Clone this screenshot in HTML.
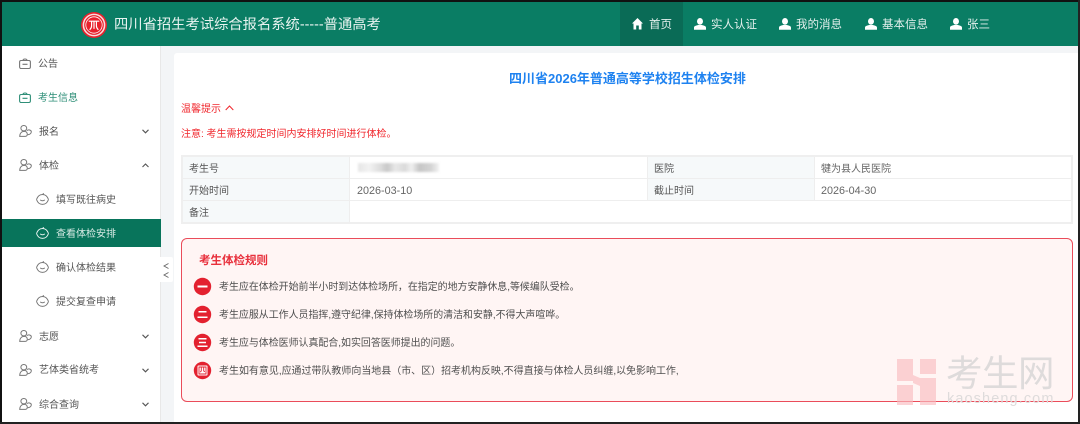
<!DOCTYPE html>
<html lang="zh"><head><meta charset="utf-8">
<style>
html,body{margin:0;padding:0}
body{width:1080px;height:424px;position:relative;overflow:hidden;background:#fff;font-family:"Liberation Sans","Noto Sans CJK SC",sans-serif;color:#555}
.a{position:absolute;white-space:nowrap}
.t{font-size:10px;line-height:16px;margin-top:1px}
.n{font-size:11.500px;line-height:16px;color:#e4f0ed;margin-top:1px}
svg{position:absolute;overflow:visible}
</style></head><body>
<!-- backgrounds -->
<div class="a" style="left:0;top:2px;width:1080px;height:44px;background:#0a7d64"></div>
<div class="a" style="left:620px;top:2px;width:63px;height:44px;background:#0a6b56"></div>
<div class="a" style="left:161px;top:46px;width:919px;height:378px;background:#f3f5f7"></div>
<div class="a" style="left:174px;top:53px;width:906px;height:371px;background:#fff;border-radius:3px 0 0 0"></div>
<div class="a" style="left:0;top:46px;width:160px;height:378px;background:#fff;border-right:1px solid #e8e8e8"></div>

<!-- header -->
<svg style="left:81px;top:11.500px" width="26" height="26" viewBox="0 0 27 27"><circle cx="13.500" cy="13.500" r="13.500" fill="#e8212c"/><circle cx="13.500" cy="13.500" r="11" fill="none" stroke="#fbdcdc" stroke-width="1.600"/><circle cx="13.500" cy="13.500" r="8.500" fill="none" stroke="#fff" stroke-width=".8"/><path d="M8 9.500h11M11 9.500v5c0 2-1 3-2 4M16 9.500v5c0 2 1 3 2 4M13.500 9.500v8" fill="none" stroke="#fff" stroke-width="1.200"/></svg>
<div class="a" style="left:114px;top:14px;font-size:14.300px;line-height:22px;color:#e8f3f0">四川省招生考试综合报名系统-----普通高考</div>

<svg style="left:632px;top:18px" width="11" height="12" viewBox="0 0 11 12"><path d="M5.500 0L11 5.500H9.500V11.500H6.800V7.500H4.200V11.500H1.500V5.500H0Z" fill="#fff"/></svg>
<div class="a n" style="left:649px;top:16px;">首页</div>
<svg style="left:694px;top:18px" width="12" height="12" viewBox="0 0 12 12"><ellipse cx="6" cy="3.400" rx="3" ry="3.400" fill="#fff"/><path d="M0 11.800V9.500C0 8 2.500 7.500 4 7h4c1.500.5 4 1 4 2.500v2.300z" fill="#fff"/></svg>
<div class="a n" style="left:711px;top:16px;">实人认证</div>
<svg style="left:779px;top:18px" width="12" height="12" viewBox="0 0 12 12"><ellipse cx="6" cy="3.400" rx="3" ry="3.400" fill="#fff"/><path d="M0 11.800V9.500C0 8 2.500 7.500 4 7h4c1.500.5 4 1 4 2.500v2.300z" fill="#fff"/></svg>
<div class="a n" style="left:796px;top:16px;">我的消息</div>
<svg style="left:865px;top:18px" width="12" height="12" viewBox="0 0 12 12"><ellipse cx="6" cy="3.400" rx="3" ry="3.400" fill="#fff"/><path d="M0 11.800V9.500C0 8 2.500 7.500 4 7h4c1.500.5 4 1 4 2.500v2.300z" fill="#fff"/></svg>
<div class="a n" style="left:882px;top:16px;">基本信息</div>
<svg style="left:950px;top:18px" width="12" height="12" viewBox="0 0 12 12"><ellipse cx="6" cy="3.400" rx="3" ry="3.400" fill="#fff"/><path d="M0 11.800V9.500C0 8 2.500 7.500 4 7h4c1.500.5 4 1 4 2.500v2.300z" fill="#fff"/></svg>
<div class="a n" style="left:967px;top:16px;">张三</div>

<!-- sidebar -->
<div class="a" style="left:2px;top:219px;width:159px;height:28px;background:#08745b"></div>

<svg style="left:19px;top:58px" width="12" height="11" viewBox="0 0 12 11" fill="none" stroke="#777" stroke-width="1.100"><rect x=".6" y="2.500" width="10.800" height="8" rx="1.500"/><path d="M4 2.500C4 .5 8 .5 8 2.500M3.500 6.300h5"/></svg>
<div class="a t" style="left:38px;top:56px;color:#555">公告</div>
<svg style="left:19px;top:92px" width="12" height="11" viewBox="0 0 12 11" fill="none" stroke="#2f8f78" stroke-width="1.100"><rect x=".6" y="2.500" width="10.800" height="8" rx="1.500"/><path d="M4 2.500C4 .5 8 .5 8 2.500M3.500 6.300h5"/></svg>
<div class="a t" style="left:38px;top:90px;color:#2f8f78">考生信息</div>

<svg style="left:19px;top:125px" width="13" height="12" viewBox="0 0 13 12" fill="none" stroke="#777" stroke-width="1"><ellipse cx="4.800" cy="3.200" rx="2.900" ry="2.700"/><path d="M.7 11.400C.9 8 2.800 6.400 5.200 6.400c1.700 0 2.900 1 3.100 2.600.2 1.400-.7 2.400-2 2.400z"/><path d="M7.900 5.700c1.200-1.300 4.500-1 4.400 1.200-.1 1.500-1.500 2.700-3.600 2.900"/></svg>
<div class="a t" style="left:39px;top:124px;color:#555">报名</div>
<svg style="left:142px;top:129px" width="7" height="5"><path d="M.5 .8L3.500 3.800 6.500 .8" fill="none" stroke="#555" stroke-width="1.100"/></svg>

<svg style="left:19px;top:159px" width="13" height="12" viewBox="0 0 13 12" fill="none" stroke="#777" stroke-width="1"><ellipse cx="4.800" cy="3.200" rx="2.900" ry="2.700"/><path d="M.7 11.400C.9 8 2.800 6.400 5.200 6.400c1.700 0 2.900 1 3.100 2.600.2 1.400-.7 2.400-2 2.400z"/><path d="M7.900 5.700c1.200-1.300 4.500-1 4.400 1.200-.1 1.500-1.500 2.700-3.600 2.900"/></svg>
<div class="a t" style="left:39px;top:158px;color:#555">体检</div>
<svg style="left:142px;top:163px" width="7" height="5"><path d="M.5 4L3.500 1 6.500 4" fill="none" stroke="#555" stroke-width="1.100"/></svg>

<svg style="left:36px;top:193px" width="13" height="12" viewBox="0 0 13 12" fill="none" stroke="#777" stroke-width="1"><path d="M.5 6.500C1.600 3.400 3.700 1.500 6.500 1.500c.5-.6 1-.9 1.500-.9M12.500 6.500C11.400 9.600 9.300 11.400 6.500 11.400S1.600 9.600.5 6.500M6.500 1.500c2.800 0 4.900 1.900 6 5"/><path d="M4.300 6.800c.9 1.300 3.500 1.300 4.400 0"/></svg>
<div class="a t" style="left:56px;top:192px;color:#555">填写既往病史</div>
<svg style="left:36px;top:227px" width="13" height="12" viewBox="0 0 13 12" fill="none" stroke="#e6f2ef" stroke-width="1"><path d="M.5 6.500C1.600 3.400 3.700 1.500 6.500 1.500c.5-.6 1-.9 1.500-.9M12.500 6.500C11.400 9.600 9.300 11.400 6.500 11.400S1.600 9.600.5 6.500M6.500 1.500c2.800 0 4.900 1.900 6 5"/><path d="M4.300 6.800c.9 1.300 3.500 1.300 4.400 0"/></svg>
<div class="a t" style="left:56px;top:226px;color:#d9ebe6">查看体检安排</div>
<svg style="left:36px;top:261px" width="13" height="12" viewBox="0 0 13 12" fill="none" stroke="#777" stroke-width="1"><path d="M.5 6.500C1.600 3.400 3.700 1.500 6.500 1.500c.5-.6 1-.9 1.500-.9M12.500 6.500C11.400 9.600 9.300 11.400 6.500 11.400S1.600 9.600.5 6.500M6.500 1.500c2.800 0 4.900 1.900 6 5"/><path d="M4.300 6.800c.9 1.300 3.500 1.300 4.400 0"/></svg>
<div class="a t" style="left:56px;top:260px;color:#555">确认体检结果</div>
<svg style="left:36px;top:295px" width="13" height="12" viewBox="0 0 13 12" fill="none" stroke="#777" stroke-width="1"><path d="M.5 6.500C1.600 3.400 3.700 1.500 6.500 1.500c.5-.6 1-.9 1.500-.9M12.500 6.500C11.400 9.600 9.300 11.400 6.500 11.400S1.600 9.600.5 6.500M6.500 1.500c2.800 0 4.900 1.900 6 5"/><path d="M4.300 6.800c.9 1.300 3.500 1.300 4.400 0"/></svg>
<div class="a t" style="left:56px;top:294px;color:#555">提交复查申请</div>

<svg style="left:19px;top:330px" width="13" height="12" viewBox="0 0 13 12" fill="none" stroke="#777" stroke-width="1"><ellipse cx="4.800" cy="3.200" rx="2.900" ry="2.700"/><path d="M.7 11.400C.9 8 2.800 6.400 5.200 6.400c1.700 0 2.900 1 3.100 2.600.2 1.400-.7 2.400-2 2.400z"/><path d="M7.900 5.700c1.200-1.300 4.500-1 4.400 1.200-.1 1.500-1.500 2.700-3.600 2.900"/></svg>
<div class="a t" style="left:39px;top:329px;color:#555">志愿</div>
<svg style="left:142px;top:334px" width="7" height="5"><path d="M.5 .8L3.500 3.800 6.500 .8" fill="none" stroke="#555" stroke-width="1.100"/></svg>
<svg style="left:19px;top:364px" width="13" height="12" viewBox="0 0 13 12" fill="none" stroke="#777" stroke-width="1"><ellipse cx="4.800" cy="3.200" rx="2.900" ry="2.700"/><path d="M.7 11.400C.9 8 2.800 6.400 5.200 6.400c1.700 0 2.900 1 3.100 2.600.2 1.400-.7 2.400-2 2.400z"/><path d="M7.900 5.700c1.200-1.300 4.500-1 4.400 1.200-.1 1.500-1.500 2.700-3.600 2.900"/></svg>
<div class="a t" style="left:39px;top:362px;color:#555">艺体类省统考</div>
<svg style="left:142px;top:368px" width="7" height="5"><path d="M.5 .8L3.500 3.800 6.500 .8" fill="none" stroke="#555" stroke-width="1.100"/></svg>
<svg style="left:19px;top:398px" width="13" height="12" viewBox="0 0 13 12" fill="none" stroke="#777" stroke-width="1"><ellipse cx="4.800" cy="3.200" rx="2.900" ry="2.700"/><path d="M.7 11.400C.9 8 2.800 6.400 5.200 6.400c1.700 0 2.900 1 3.100 2.600.2 1.400-.7 2.400-2 2.400z"/><path d="M7.900 5.700c1.200-1.300 4.500-1 4.400 1.200-.1 1.500-1.500 2.700-3.600 2.900"/></svg>
<div class="a t" style="left:39px;top:397px;color:#555">综合查询</div>
<svg style="left:142px;top:402px" width="7" height="5"><path d="M.5 .8L3.500 3.800 6.500 .8" fill="none" stroke="#555" stroke-width="1.100"/></svg>

<!-- collapse tab -->
<div class="a" style="left:160px;top:257px;width:13px;height:25px;background:#fff;border-radius:0 2px 2px 0"></div>
<svg style="left:163px;top:263px" width="7" height="16" fill="none" stroke="#666" stroke-width=".9"><path d="M5.500 .5L1 3l4.500 2.500M5.500 9.500L1 12l4.500 2.500"/></svg>

<!-- content -->
<div class="a" style="left:509px;top:70px;font-size:13px;line-height:18px;font-weight:700;color:#1e82f0">四川省2026年普通高等学校招生体检安排</div>
<div class="a t" style="left:181px;top:101px;color:#f0272d">温馨提示</div>
<svg style="left:225px;top:105px" width="9" height="6"><path d="M.7 5L4.500 1 8.300 5" fill="none" stroke="#f0272d" stroke-width="1"/></svg>
<div class="a t" style="left:181px;top:126px;color:#f0272d">注意: 考生需按规定时间内安排好时间进行体检。</div>

<!-- table -->
<div class="a" style="left:181px;top:155px;width:892px;height:69px;border:2px solid #efefef;box-sizing:border-box;background:#fff"></div>
<div class="a" style="left:183px;top:157px;width:166px;height:65px;background:#f6f9fa"></div>
<div class="a" style="left:648px;top:157px;width:166px;height:43px;background:#f6f9fa"></div>
<div class="a" style="left:183px;top:178px;width:888px;height:1px;background:#eeeeee"></div>
<div class="a" style="left:183px;top:200px;width:888px;height:1px;background:#eeeeee"></div>
<div class="a" style="left:349px;top:157px;width:1px;height:65px;background:#eeeeee"></div>
<div class="a" style="left:647px;top:157px;width:1px;height:43px;background:#eeeeee"></div>
<div class="a" style="left:814px;top:157px;width:1px;height:43px;background:#eeeeee"></div>
<div class="a t" style="left:189px;top:161px;color:#555">考生号</div>
<div class="a" style="left:358px;top:163px;width:81px;height:9px;background:linear-gradient(90deg,#e6e6e6 0,#f2f2f2 14%,#dcdcdc 28%,#c8c8c8 36%,#e8e8e8 46%,#dadada 58%,#f0f0f0 66%,#c6c6c6 76%,#d4d4d4 90%,#f2f2f2 100%);filter:blur(1px)"></div>
<div class="a t" style="left:654px;top:161px;color:#555">医院</div>
<div class="a t" style="left:821px;top:161px;color:#666">犍为县人民医院</div>
<div class="a t" style="left:189px;top:183px;color:#555">开始时间</div>
<div class="a" style="left:357px;top:182.500px;font-size:10.800px;line-height:16px;color:#666">2026-03-10</div>
<div class="a t" style="left:654px;top:183px;color:#555">截止时间</div>
<div class="a" style="left:821px;top:182.500px;font-size:10.800px;line-height:16px;color:#666">2026-04-30</div>
<div class="a t" style="left:189px;top:205px;color:#555">备注</div>

<!-- rules box -->
<div class="a" style="left:181px;top:238px;width:892px;height:164px;box-sizing:border-box;border:1.500px solid #ea4c5a;border-radius:6px;background:#fff5f4"></div>
<div class="a" style="left:199px;top:253px;font-size:11.500px;line-height:16px;font-weight:700;color:#e8303c">考生体检规则</div>

<svg style="left:194px;top:278px" width="17" height="17"><circle cx="8.500" cy="8.500" r="8.700" fill="#e3212f"/><rect x="3.500" y="7.500" width="10" height="2" fill="#fff"/></svg>
<div class="a t" style="left:219px;top:279px;font-size:9.950px;color:#4e4e4e">考生应在体检开始前半小时到达体检场所，在指定的地方安静休息,等候编队受检。</div>
<svg style="left:194px;top:306px" width="17" height="17"><circle cx="8.500" cy="8.500" r="8.700" fill="#e3212f"/><path d="M4.500 5h8v1.500h-8zM3.500 10.500h10V12h-10z" fill="#fff"/></svg>
<div class="a t" style="left:219px;top:307px;font-size:9.950px;color:#4e4e4e">考生应服从工作人员指挥,遵守纪律,保持体检场所的清洁和安静,不得大声喧哗。</div>
<svg style="left:194px;top:334px" width="17" height="17"><circle cx="8.500" cy="8.500" r="8.700" fill="#e3212f"/><path d="M4.500 4h8v1.500h-8zM5 7.800h7v1.400H5zM3.500 11.500h10V13h-10z" fill="#fff"/></svg>
<div class="a t" style="left:219px;top:335px;font-size:9.950px;color:#4e4e4e">考生应与体检医师认真配合,如实回答医师提出的问题。</div>
<svg style="left:194px;top:362px" width="17" height="17"><circle cx="8.500" cy="8.500" r="8.700" fill="#e3212f"/><rect x="3.500" y="3.500" width="10" height="10" rx="1" fill="#fff"/><path d="M5 5h7v7H5zM7.300 5v3.500c0 .8-.4 1.200-1.200 1.500M9.700 5v3.500c0 .8.300 1 1.200 1" fill="none" stroke="#e3212f" stroke-width=".9"/></svg>
<div class="a t" style="left:219px;top:363px;font-size:9.980px;color:#4e4e4e">考生如有意见,应通过带队教师向当地县（市、区）招考机构反映,不得直接与体检人员纠缠,以免影响工作,</div>

<!-- watermark -->
<svg style="left:897px;top:359px" width="40" height="46"><path d="M0 0H16V22H0zM23 0H39V15H23zM0 26H16V46H0zM23 19H39V46H23zM16 16L23 19V27L16 24z" fill="#f9bcc0" opacity=".65"/></svg>
<div class="a" style="left:946px;top:354px;font-size:36.500px;line-height:40px;letter-spacing:-.5px;color:#dedbdb">考生网</div>
<div class="a" style="left:947px;top:391px;font-size:14.500px;line-height:16px;letter-spacing:1.100px;color:#dedbdb">kaosheng.com</div>

<!-- screenshot frame -->
<div class="a" style="left:0;top:0;width:1080px;height:2px;background:#111"></div>
<div class="a" style="left:0;top:0;width:2px;height:424px;background:#111"></div>
<div class="a" style="left:1078px;top:0;width:2px;height:424px;background:#222"></div>
<div class="a" style="left:0;top:422px;width:1080px;height:2px;background:#222"></div>
</body></html>
